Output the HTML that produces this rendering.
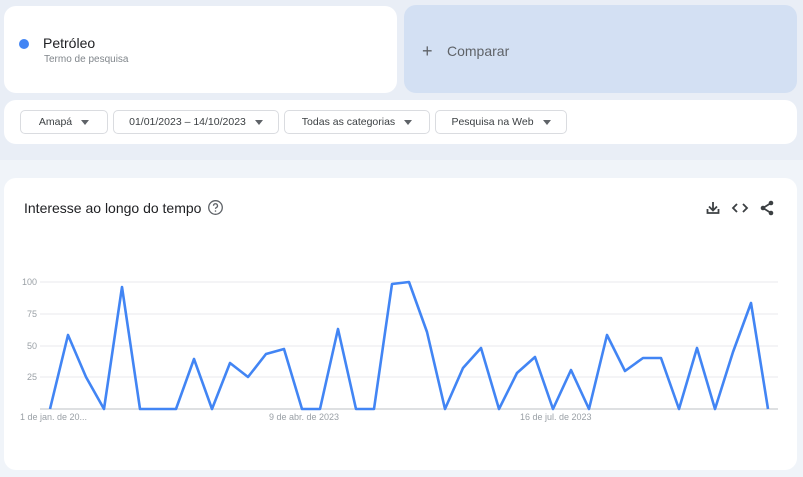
<!DOCTYPE html>
<html><head><meta charset="utf-8"><style>
*{margin:0;padding:0;box-sizing:border-box}
body{width:803px;height:477px;background:#f0f4f9;font-family:"Liberation Sans",sans-serif;position:relative;overflow:hidden}
.top{position:absolute;left:0;top:0;width:803px;height:160px;background:#e9eef6}
.card{position:absolute;background:#fff;border-radius:12px}
.btn{position:absolute;top:110px;height:24px;border:1px solid #dadce0;border-radius:5px;font-size:10.5px;color:#3c4043;display:flex;align-items:center;justify-content:center;gap:9px}
.btn i{width:0;height:0;border-left:4px solid transparent;border-right:4px solid transparent;border-top:5px solid #5f6368}
</style></head><body>
<div class="top"></div>
<div class="card" style="left:4px;top:6px;width:393px;height:87px">
  <div style="position:absolute;left:15px;top:33px;width:10px;height:10px;border-radius:50%;background:#4285f4"></div>
  <div style="position:absolute;left:39px;top:29px;font-size:14px;color:#202124">Petróleo</div>
  <div style="position:absolute;left:40px;top:48px;font-size:10px;color:#80868b">Termo de pesquisa</div>
</div>
<div class="card" style="left:404px;top:5px;width:393px;height:88px;background:#d3e0f3">
  <div style="position:absolute;left:18px;top:37px;font-size:18px;line-height:18px;color:#5f6368;font-weight:300">+</div>
  <div style="position:absolute;left:43px;top:38px;font-size:14px;color:#5f6368">Comparar</div>
</div>
<div class="card" style="left:4px;top:100px;width:793px;height:44px"></div>
<div class="btn" style="left:20px;width:88px">Amapá <i></i></div>
<div class="btn" style="left:113px;width:166px">01/01/2023 – 14/10/2023 <i></i></div>
<div class="btn" style="left:284px;width:146px">Todas as categorias <i></i></div>
<div class="btn" style="left:435px;width:132px">Pesquisa na Web <i></i></div>
<div class="card" style="left:4px;top:178px;width:793px;height:292px"></div>
<div style="position:absolute;left:24px;top:200px;font-size:14px;color:#202124">Interesse ao longo do tempo</div>
<svg style="position:absolute;left:207px;top:199px" width="17" height="17" viewBox="0 0 17 17"><circle cx="8.5" cy="8.5" r="6.8" fill="none" stroke="#5f6368" stroke-width="1.3"/><path d="M6.5 6.8a2 2 0 1 1 2.8 1.8c-.6.3-.8.7-.8 1.3" fill="none" stroke="#5f6368" stroke-width="1.3"/><circle cx="8.5" cy="12" r=".8" fill="#5f6368"/></svg>
<svg style="position:absolute;left:700px;top:199px" width="80" height="18" viewBox="0 0 80 18">
<g fill="none" stroke="#3c4043" stroke-width="1.8">
<path d="M13 3v8M9 7.5l4 4 4-4M7.5 10v4h11v-4"/>
<path d="M37 5l-4 4 4 4M43 5l4 4-4 4"/>
<path d="M71 4l-8 5 8 5"/></g>
<g fill="#3c4043"><circle cx="71" cy="4" r="2.3"/><circle cx="63" cy="9" r="2.3"/><circle cx="71" cy="14" r="2.3"/></g>
</svg>
<svg style="position:absolute;left:0;top:270px" width="803" height="160">
<g stroke="#e8eaed" stroke-width="1"><line x1="40" y1="12" x2="778" y2="12"/><line x1="40" y1="44" x2="778" y2="44"/><line x1="40" y1="76" x2="778" y2="76"/><line x1="40" y1="107" x2="778" y2="107"/></g>
<line x1="40" y1="139" x2="778" y2="139" stroke="#bdc1c6"/>
<g font-size="9" fill="#9aa0a6" font-family="Liberation Sans" text-anchor="end"><text x="37" y="15">100</text><text x="37" y="47">75</text><text x="37" y="79">50</text><text x="37" y="110">25</text></g>
<g font-size="9" fill="#9aa0a6" font-family="Liberation Sans"><text x="20" y="150">1 de jan. de 20...</text><text x="269" y="150">9 de abr. de 2023</text><text x="520" y="150">16 de jul. de 2023</text></g>
<polyline fill="none" stroke="#4285f4" stroke-width="2.6" stroke-linejoin="round" points="50,139 68,65 86,107 104,139 122,17 140,139 158,139 176,139 194,89 212,139 230,93 248,107 266,84 284,79 302,139 320,139 338,59 356,139 374,139 392,14 409,12 427,62 445,139 463,98 481,78 499,139 517,103 535,87 553,139 571,100 589,139 607,65 625,101 643,88 661,88 679,139 697,78 715,139 733,82 751,33 768,139"/>
</svg>
</body></html>
